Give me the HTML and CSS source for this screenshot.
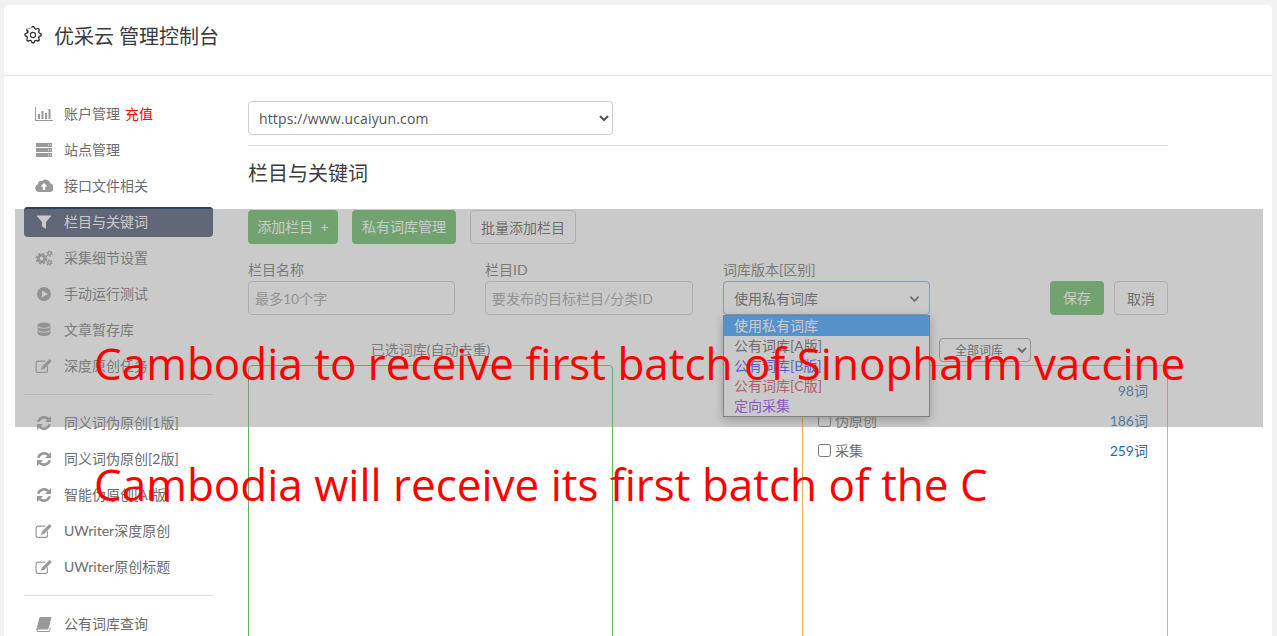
FILE: index.html
```html
<!DOCTYPE html>
<html lang="zh-CN">
<head>
<meta charset="utf-8">
<title>优采云 管理控制台</title>
<link rel="stylesheet" href="styles.css">
</head>
<body>
<div class="card">
  <header class="card-head">
    <svg class="gear" viewBox="0 0 16 16"><path d="M8 5.200a2.800 2.800 0 1 0 0 5.600 2.800 2.800 0 0 0 0-5.600zM6.200 8a1.800 1.800 0 1 1 3.600 0 1.800 1.800 0 0 1-3.600 0z" fill-rule="evenodd"/><path d="M9.800 1.300c-.5-1.700-3-1.700-3.500 0l-.1.3a.9.9 0 0 1-1.300.5l-.3-.1c-1.600-.9-3.300.9-2.400 2.400l.1.3a.9.9 0 0 1-.5 1.300l-.3.1c-1.700.5-1.700 3 0 3.500l.3.1a.9.9 0 0 1 .5 1.300l-.1.3c-.9 1.600.9 3.300 2.400 2.400l.3-.1a.9.9 0 0 1 1.300.5l.1.3c.5 1.700 3 1.700 3.500 0l.1-.3a.9.9 0 0 1 1.300-.5l.3.1c1.600.9 3.300-.9 2.400-2.400l-.1-.3a.9.9 0 0 1 .5-1.300l.3-.1c1.700-.5 1.700-3 0-3.500l-.3-.1a.9.9 0 0 1-.5-1.300l.1-.3c.9-1.600-.9-3.300-2.400-2.400l-.3.1a.9.9 0 0 1-1.300-.5zM7.300 1.600c.2-.7 1.200-.7 1.400 0l.1.3a1.900 1.900 0 0 0 2.800 1.100l.3-.1c.6-.4 1.300.3.9.9l-.1.3a1.900 1.900 0 0 0 1.100 2.800l.3.1c.7.2.7 1.200 0 1.400l-.3.1a1.900 1.900 0 0 0-1.100 2.800l.1.3c.4.6-.3 1.300-.9.9l-.3-.1a1.900 1.900 0 0 0-2.800 1.100l-.1.3c-.2.7-1.200.7-1.400 0l-.1-.3a1.900 1.900 0 0 0-2.800-1.100l-.3.1c-.6.4-1.300-.3-.9-.9l.1-.3a1.900 1.900 0 0 0-1.100-2.800l-.3-.1c-.7-.2-.7-1.200 0-1.400l.3-.1A1.900 1.900 0 0 0 3.100 3.300l-.1-.3c-.4-.6.3-1.300.9-.9l.3.1a1.900 1.900 0 0 0 2.800-1.100z" fill-rule="evenodd"/></svg>
    <h1 class="brand">优采云 管理控制台</h1>
  </header>
  <div class="card-body">
    <nav class="side">
      <a class="nav-item"><svg class="ico" viewBox="0 0 18 16"><path d="M0 1h1v13h17v1H0z"/><path d="M3 8h2v5H3zM6.500 5h2v8h-2zM10 7h2v6h-2zM13.500 3h2v10h-2z"/></svg>账户管理<span class="topup">充值</span></a>
      <a class="nav-item"><svg class="ico" viewBox="0 0 18 16"><path d="M1 1h16v4H1zM1 6h16v4H1zM1 11h16v4H1z"/><path class="cut" d="M13 2.500h1v1h-1zM15 2.500h1v1h-1zM13 7.500h1v1h-1zM15 7.500h1v1h-1zM13 12.500h1v1h-1zM15 12.500h1v1h-1z"/></svg>站点管理</a>
      <a class="nav-item"><svg class="ico" viewBox="0 0 18 16"><path d="M4 14a4 4 0 0 1-1-7.800A3 3 0 0 1 7 3a5 5 0 0 1 8.500 2.500A4.300 4.300 0 0 1 14 14z"/><path class="cut" d="M9 5l3.500 3.500H10.200V12H7.800V8.500H5.500z"/></svg>接口文件相关</a>
      <a class="nav-item active"><svg class="ico" viewBox="0 0 16 16"><path d="M.500 1.500h15L10 8v7L6 12.500V8z"/></svg>栏目与关键词</a>
      <a class="nav-item"><svg class="ico" viewBox="0 0 18 16"><circle class="ring" cx="6.500" cy="8.500" r="3.200"/><circle class="teeth" cx="6.500" cy="8.500" r="5"/><circle class="ring thin" cx="14.500" cy="3.500" r="1.600"/><circle class="teeth small" cx="14.500" cy="3.500" r="2.700"/><circle class="ring thin" cx="14.500" cy="12.500" r="1.600"/><circle class="teeth small" cx="14.500" cy="12.500" r="2.700"/></svg>采集细节设置</a>
      <a class="nav-item"><svg class="ico" viewBox="0 0 16 16"><path fill-rule="evenodd" d="M8 1a7 7 0 1 0 0 14A7 7 0 0 0 8 1zM6 4.500l6 3.500-6 3.500z"/></svg>手动运行测试</a>
      <a class="nav-item"><svg class="ico" viewBox="0 0 16 16"><ellipse cx="8" cy="3.200" rx="6.500" ry="2.600"/><path d="M1.500 5c1 1.500 3.500 2.200 6.500 2.200S13.500 6.500 14.500 5v2.500c0 1.500-3 2.700-6.500 2.700S1.500 9 1.500 7.500zM1.500 9c1 1.500 3.500 2.200 6.500 2.200S13.500 10.500 14.500 9v2.500c0 1.700-3 3-6.500 3s-6.500-1.300-6.500-3z" transform="translate(0 -.5)"/></svg>文章暂存库</a>
      <a class="nav-item"><svg class="ico" viewBox="0 0 18 16"><path d="M3 2.500h8l-1.200 1.200H3A1.300 1.300 0 0 0 1.700 5v7.500A1.300 1.300 0 0 0 3 13.800h7.500a1.300 1.300 0 0 0 1.300-1.300V9l1.200-1.200v4.700a2.500 2.500 0 0 1-2.500 2.500H3a2.500 2.500 0 0 1-2.500-2.500V5A2.500 2.500 0 0 1 3 2.500z"/><path d="M14.500 1l2.200 2.200L9 11l-3 .8.800-3z"/></svg>深度原创任务</a>
      <hr class="nav-sep">
      <a class="nav-item"><svg class="ico" viewBox="0 0 16 16"><path class="arc" d="M2.300 6.800A5.900 5.900 0 0 1 12.300 4.200M13.700 9.200A5.900 5.900 0 0 1 3.700 11.800"/><path d="M15 1v6H9zM1 15V9h6z"/></svg>同义词伪原创[1版]</a>
      <a class="nav-item"><svg class="ico" viewBox="0 0 16 16"><path class="arc" d="M2.300 6.800A5.900 5.900 0 0 1 12.300 4.200M13.700 9.200A5.900 5.900 0 0 1 3.700 11.800"/><path d="M15 1v6H9zM1 15V9h6z"/></svg>同义词伪原创[2版]</a>
      <a class="nav-item"><svg class="ico" viewBox="0 0 16 16"><path class="arc" d="M2.300 6.800A5.900 5.900 0 0 1 12.300 4.200M13.700 9.200A5.900 5.900 0 0 1 3.700 11.800"/><path d="M15 1v6H9zM1 15V9h6z"/></svg>智能伪原创[AI版]</a>
      <a class="nav-item"><svg class="ico" viewBox="0 0 18 16"><path d="M3 2.500h8l-1.200 1.200H3A1.300 1.300 0 0 0 1.700 5v7.500A1.300 1.300 0 0 0 3 13.800h7.500a1.300 1.300 0 0 0 1.300-1.300V9l1.200-1.200v4.700a2.500 2.500 0 0 1-2.500 2.500H3a2.500 2.500 0 0 1-2.500-2.500V5A2.500 2.500 0 0 1 3 2.500z"/><path d="M14.500 1l2.200 2.200L9 11l-3 .8.800-3z"/></svg>UWriter深度原创</a>
      <a class="nav-item"><svg class="ico" viewBox="0 0 18 16"><path d="M3 2.500h8l-1.200 1.200H3A1.300 1.300 0 0 0 1.700 5v7.500A1.300 1.300 0 0 0 3 13.800h7.500a1.300 1.300 0 0 0 1.300-1.300V9l1.200-1.200v4.700a2.500 2.500 0 0 1-2.500 2.500H3a2.500 2.500 0 0 1-2.500-2.500V5A2.500 2.500 0 0 1 3 2.500z"/><path d="M14.500 1l2.200 2.200L9 11l-3 .8.800-3z"/></svg>UWriter原创标题</a>
      <hr class="nav-sep">
      <a class="nav-item"><svg class="ico" viewBox="0 0 16 16"><path d="M4.500 1H15l.5.800-3 10.700a1.500 1.500 0 0 1-1.400 1.100H2.500a.8.800 0 0 0-.8.500c-.1.500.3.900.8.900H13l1-3.500.8.500-1.300 4.500H2.300C1 15.500 0 14.500.400 13.300L3.300 2.200A1.500 1.500 0 0 1 4.500 1z"/></svg>公有词库查询</a>
    </nav>
    <main class="main">
      <select class="input site-select"><option>https://www.ucaiyun.com</option></select>
      <hr class="rule">
      <h2 class="title">栏目与关键词</h2>
      <div class="btn-row">
        <button class="btn green add">添加栏目&nbsp;&nbsp;+</button>
        <button class="btn green">私有词库管理</button>
        <button class="btn plain batch">批量添加栏目</button>
      </div>
      <div class="form-row">
        <label class="field f1"><span class="lab">栏目名称</span><input class="input" placeholder="最多10个字"></label>
        <label class="field f2"><span class="lab">栏目ID</span><input class="input" placeholder="要发布的目标栏目/分类ID"></label>
        <div class="field f3">
          <span class="lab">词库版本[区别]</span>
          <div class="fake-select">使用私有词库<svg class="chev" viewBox="0 0 12 8"><path d="M1.500 1.500L6 6l4.500-4.500"/></svg></div>
          <ul class="dropdown">
            <li class="sel">使用私有词库</li>
            <li>公有词库[A版]</li>
            <li class="v-b">公有词库[B版]</li>
            <li class="v-c">公有词库[C版]</li>
            <li class="v-d">定向采集</li>
          </ul>
        </div>
        <button class="btn green save">保存</button>
        <button class="btn plain">取消</button>
      </div>
      <div class="lib-row">
        <section class="lib">
          <div class="lib-head center">已选词库(自动去重)</div>
          <div class="lib-box ok"></div>
        </section>
        <section class="lib wide">
          <div class="lib-head end"><select class="mini"><option>全部词库</option></select></div>
          <div class="lib-box warn">
            <label class="lib-line"><span><input type="checkbox" class="ck">原创</span><a>98词</a></label>
            <label class="lib-line"><span><input type="checkbox" class="ck">伪原创</span><a>186词</a></label>
            <label class="lib-line"><span><input type="checkbox" class="ck">采集</span><a>259词</a></label>
          </div>
        </section>
      </div>
    </main>
  </div>
</div>
<div class="veil"></div>
<div class="news n1">Cambodia to receive first batch of Sinopharm vaccine</div>
<div class="news n2">Cambodia will receive its first batch of the C</div>
</body>
</html>
```

FILE: styles.css
```css
* { box-sizing: border-box; }
html, body { margin: 0; height: 636px; overflow: hidden; }
body {
  background: #f2f2f2;
  padding: 5px 5px 0 4px;
  font-family: "Lato", "Noto Sans CJK SC", sans-serif;
  font-size: 14px;
  color: #6c6c6c;
}
.card { background: #fff; border-radius: 5px; height: 700px; }
.card-head {
  height: 71px;
  border-bottom: 1px solid #e6e6e6;
  display: flex;
  align-items: center;
  padding: 0 20px 10px;
}
.gear { width: 18px; height: 18px; fill: #333; margin-right: 12px; }
.brand { margin: 0; font-size: 20px; font-weight: 400; color: #3c3c3c; }
.card-body { display: flex; padding-top: 23px; }

.side { width: 189px; margin-left: 20px; flex: none; }
.nav-item {
  display: flex;
  align-items: center;
  height: 30px;
  margin-bottom: 6px;
  padding: 0 0 2px 11px;
  border-radius: 4px;
  color: #6c6c6c;
  white-space: nowrap;
}
.nav-item .ico { width: 18px; height: 16px; fill: #999; margin: 2px 11px 0 0; flex: none; }
.ico .cut { fill: #fff; }
.ico .arc { fill: none; stroke: #999; stroke-width: 2.6; }
.ico .ring { fill: none; stroke: #999; stroke-width: 2.6; }
.ico .ring.thin { stroke-width: 1.400; }
.ico .teeth { fill: none; stroke: #999; stroke-width: 1.800; stroke-dasharray: 2.200 1.730; }
.ico .teeth.small { stroke-width: 1.100; stroke-dasharray: 1.400 1.430; }
.topup { color: #f00; margin-left: 5px; }
.active { background: #3b4a66; box-shadow: inset 0 2px 0 #2f3f5f; color: #fff; }
.active .ico { fill: #fff; }
.nav-sep { border: 0; border-top: 1px solid #e1e1e1; margin: 13px 0; }

.main { width: 920px; margin: 2px 0 0 35px; flex: none; }
.input {
  height: 34px;
  border: 1px solid #ccc;
  border-radius: 4px;
  background: #fff;
  padding: 0 6px;
  font: inherit;
  color: #555;
  width: 100%;
}
.input::placeholder { color: #999; }
.site-select { width: 365px; display: block; font-family: "Open Sans", "Noto Sans CJK SC", sans-serif; letter-spacing: .13px; }
.rule { border: 0; border-top: 1px solid #ddd; margin: 10px 0 0; }
.title { margin: 13px 0 23px; font-size: 20px; line-height: 28px; font-weight: 400; color: #3c3c3c; }
.btn-row { display: flex; gap: 14px; }
.btn {
  height: 34px;
  padding: 0 8px;
  border-radius: 4px;
  font: inherit;
  border: 1px solid transparent;
}
.btn-row .btn { padding: 0 9px; }
.btn-row .green { padding-bottom: 2px; }
.btn-row .add { width: 90px; padding: 0 0 2px; }
.btn-row .batch { width: 106px; padding: 0; }
.green { background: #5cb85c; color: #fff; }
.plain { background: #fff; color: #555; border-color: #ccc; }
.form-row { display: flex; align-items: flex-end; margin-top: 16px; }
.field { display: block; position: relative; flex: none; margin-right: 30px; }
.f1 { width: 207px; }
.f2 { width: 208px; }
.f3 { width: 207px; margin-right: 120px; }
.lab { display: block; line-height: 20px; margin-bottom: 1px; }
.save { width: 54px; margin-right: 10px; padding-bottom: 2px; }
.form-row .plain { width: 54px; }
.fake-select {
  height: 34px;
  border: 1px solid #7aa7d9;
  border-radius: 4px;
  padding: 1px 10px 0;
  line-height: 32px;
  color: #555;
  display: flex;
  justify-content: space-between;
  align-items: center;
}
.chev { width: 11px; height: 8px; margin-right: -1px; fill: none; stroke: #555; stroke-width: 2; }
.dropdown {
  position: absolute;
  left: 0;
  top: 55px;
  width: 207px;
  margin: 0;
  padding: 0;
  list-style: none;
  background: #fff;
  border: 1px solid #767676;
  box-shadow: 0 3px 10px rgba(0,0,0,.35);
  z-index: 2;
}
.dropdown li { height: 20px; line-height: 20px; padding-left: 10px; color: #555; }
.dropdown .sel { background: #2b96ff; color: #fff; }
.dropdown .v-b { color: #3a3aff; }
.dropdown .v-c { color: #c9404e; }
.dropdown .v-d { color: #8a2be2; }
.lib-row { display: flex; justify-content: space-between; margin-top: 23px; }
.lib { width: 365px; }
.lib.wide { width: 366px; }
.lib-head { height: 27px; line-height: 24px; }
.center { text-align: center; }
.end { display: flex; justify-content: flex-end; padding-right: 137px; }
.mini {
  width: 92px;
  height: 24px;
  border: 1px solid #999;
  border-radius: 4px;
  background: #fff;
  font: inherit;
  font-size: 12px;
  color: #555;
  padding-left: 11px;
}
.lib-box { height: 400px; border: 1px solid; border-radius: 4px 4px 0 0; padding: 10px 19px 0 15px; }
.ok { border-color: #5cb85c; }
.warn { border-color: #f0ad4e; }
.lib-line { display: flex; justify-content: space-between; height: 30px; line-height: 30px; }
.lib-line a { color: #1c6eb0; }
.ck { width: 13px; height: 13px; margin: 0 4px 0 0; vertical-align: -1px; }
.veil {
  position: absolute;
  left: 15px;
  top: 209px;
  width: 1248px;
  height: 218px;
  background: rgba(139,139,139,.46);
  z-index: 5;
}
.news {
  position: absolute;
  left: 94px;
  z-index: 6;
  color: #f00;
  font-family: "Open Sans", sans-serif;
  font-size: 44px;
  line-height: 60px;
  white-space: nowrap;
}
.n1 { top: 333px; }
.n2 { top: 454px; }
```
